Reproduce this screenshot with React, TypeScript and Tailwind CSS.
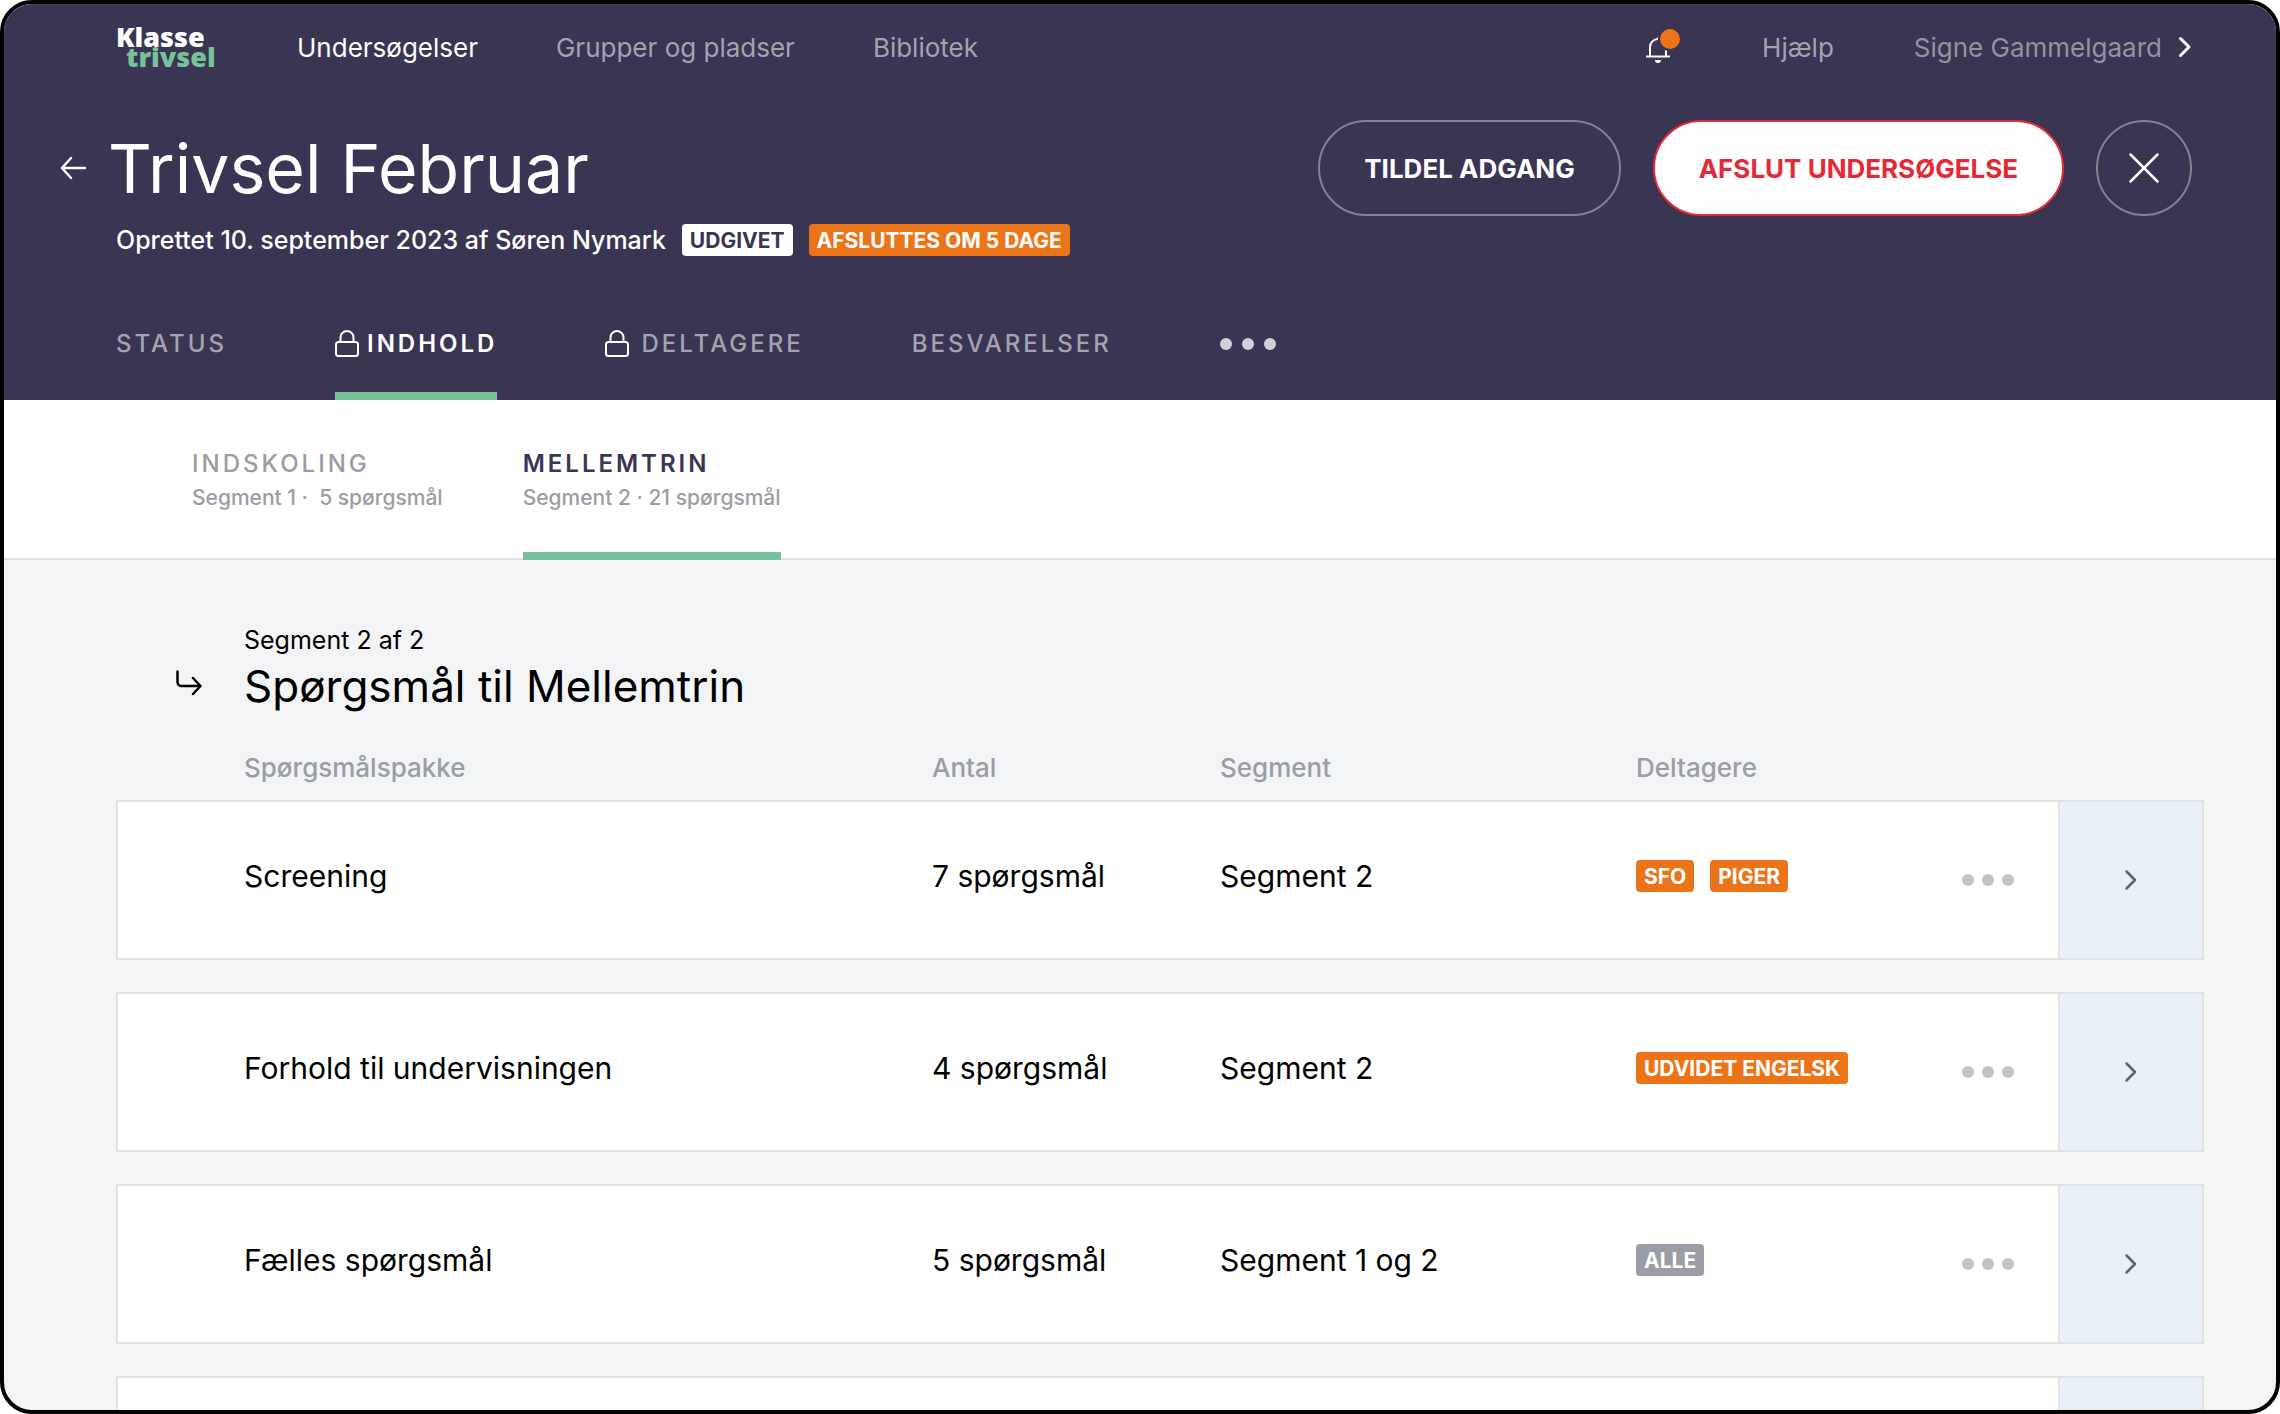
import React from 'react';
import clsx from 'clsx';

type BadgeTone = 'white' | 'orange' | 'gray';

interface PackageRow {
  name: string;
  count: string;
  segment: string;
  participants: { label: string; tone: BadgeTone }[];
}

const PACKAGES: PackageRow[] = [
  {
    name: 'Screening',
    count: '7 spørgsmål',
    segment: 'Segment 2',
    participants: [
      { label: 'SFO', tone: 'orange' },
      { label: 'PIGER', tone: 'orange' },
    ],
  },
  {
    name: 'Forhold til undervisningen',
    count: '4 spørgsmål',
    segment: 'Segment 2',
    participants: [{ label: 'UDVIDET ENGELSK', tone: 'orange' }],
  },
  {
    name: 'Fælles spørgsmål',
    count: '5 spørgsmål',
    segment: 'Segment 1 og 2',
    participants: [{ label: 'ALLE', tone: 'gray' }],
  },
  { name: '', count: '', segment: '', participants: [] },
];

// Shared by the heading row and the cards so the columns line up
const GRID = 'grid grid-cols-[814fr_288fr_416fr_300fr_122px_144px] border-x-2';

function Badge({ label, tone }: { label: string; tone: BadgeTone }) {
  return (
    <span
      className={clsx(
        'inline-flex h-8 items-center rounded px-2 text-[21px] leading-none font-bold whitespace-nowrap',
        tone === 'white' && 'bg-white text-[#393552]',
        tone === 'orange' && 'bg-[#ec7418] text-white',
        tone === 'gray' && 'bg-[#9a9da6] text-white'
      )}
    >
      {label}
    </span>
  );
}

function Dots({ className, gap }: { className: string; gap: number }) {
  return (
    <svg width={12 + gap * 2} height="12" viewBox={`0 0 ${12 + gap * 2} 12`} className={className} fill="currentColor">
      <circle cx="6" cy="6" r="6" />
      <circle cx={6 + gap} cy="6" r="6" />
      <circle cx={6 + gap * 2} cy="6" r="6" />
    </svg>
  );
}

function LockIcon() {
  return (
    <svg width="24" height="28" viewBox="0 0 24 28" fill="none" stroke="white" strokeWidth="2" className="shrink-0">
      <rect x="1" y="12" width="22" height="14" rx="2.5" />
      <path d="M5.500 12V7.500a6.500 6.500 0 0 1 13 0V12" />
    </svg>
  );
}

function ChevronIcon({ className, width }: { className: string; width: number }) {
  return (
    <svg
      width="14"
      height="22"
      viewBox="0 0 14 22"
      fill="none"
      stroke="currentColor"
      strokeWidth={width}
      strokeLinecap="round"
      strokeLinejoin="round"
      className={className}
    >
      <path d="M2.5 2.5 11 11l-8.5 8.5" />
    </svg>
  );
}

function Logo() {
  return (
    <a href="#" className="flex w-[181px] flex-col font-['Open_Sans'] text-[27px] leading-5 font-extrabold">
      <span className="text-white">Klasse</span>
      <span className="pl-[10px] text-[#77c29b]">trivsel</span>
    </a>
  );
}

function BellIcon() {
  return (
    <svg width="36" height="36" viewBox="0 0 36 36" fill="none">
      <path d="M12 10V8.5M4 27.5V18a8 8 0 0 1 8-8 8 8 0 0 1 8 8v9.5" stroke="white" strokeWidth="2" />
      <path d="M0 27.5h24" stroke="white" strokeWidth="2" />
      <path d="M9 31h6a3 3 0 0 1-6 0Z" fill="white" />
      <circle cx="24" cy="10" r="12" fill="#393552" />
      <circle cx="24" cy="10" r="10" fill="#ec7418" />
    </svg>
  );
}

function TopNav() {
  return (
    <nav className="flex h-[86px] items-center pr-[84px] pl-28 text-[26px] text-[#a5a4ae]">
      <Logo />
      <div className="flex gap-[78px]">
        <a href="#" className="text-white">Undersøgelser</a>
        <a href="#">Grupper og pladser</a>
        <a href="#">Bibliotek</a>
      </div>
      <div className="ml-auto flex items-center gap-20">
        <button aria-label="Notifikationer" className="cursor-pointer">
          <BellIcon />
        </button>
        <a href="#">Hjælp</a>
        <button className="flex cursor-pointer items-center gap-4 text-[#93959e]">
          Signe Gammelgaard
          <ChevronIcon className="text-white" width={3} />
        </button>
      </div>
    </nav>
  );
}

function Header() {
  return (
    <header className="bg-[#393552] text-white">
      <TopNav />
      <div className="flex items-center pt-[30px] pr-[84px] pl-14">
        <a href="#" aria-label="Tilbage" className="mr-5">
          <svg width="28" height="24" viewBox="0 0 28 24" fill="none" stroke="white" strokeWidth="2.5" strokeLinecap="round" strokeLinejoin="round">
            <path d="M25 12H2M11 2 2 12l9 10" />
          </svg>
        </a>
        <h1 className="text-[68px] leading-[96px]">Trivsel Februar</h1>
        <div className="ml-auto flex gap-8 text-[26px] font-bold">
          <button className="h-24 cursor-pointer rounded-full border-2 border-[#86838f] px-11">TILDEL ADGANG</button>
          <button className="h-24 cursor-pointer rounded-full border-2 border-[#e22b38] bg-white px-11 text-[#e22b38]">
            AFSLUT UNDERSØGELSE
          </button>
          <button aria-label="Luk" className="flex size-24 cursor-pointer items-center justify-center rounded-full border-2 border-[#86838f]">
            <svg width="30" height="30" viewBox="0 0 30 30" stroke="white" strokeWidth="2.5" strokeLinecap="round">
              <path d="M1.500 1.500 28.500 28.500M28.500 1.500 1.500 28.500" />
            </svg>
          </button>
        </div>
      </div>
      <div className="flex items-center pt-2 pl-28">
        <p className="mr-4 text-[25px] leading-8 font-medium">Oprettet 10. september 2023 af Søren Nymark</p>
        <div className="flex gap-4">
          <Badge label="UDGIVET" tone="white" />
          <Badge label="AFSLUTTES OM 5 DAGE" tone="orange" />
        </div>
      </div>
      <div className="mt-8 flex h-28 gap-[108px] pl-28 text-[24px] leading-none font-medium tracking-[3px] text-[#a5a4ae]">
        <a href="#" className="flex items-center">STATUS</a>
        <a href="#" className="flex items-center gap-2 border-b-8 border-[#77c29b] pt-2 font-semibold text-white">
          <LockIcon />
          INDHOLD
        </a>
        <a href="#" className="flex items-center gap-3">
          <LockIcon />
          DELTAGERE
        </a>
        <a href="#" className="flex items-center">BESVARELSER</a>
        <button aria-label="Flere faner" className="cursor-pointer">
          <Dots className="text-[#d0cfd6]" gap={22} />
        </button>
      </div>
    </header>
  );
}

function SegmentTab({ title, info, active }: { title: string; info: string; active?: boolean }) {
  return (
    <a
      href="#"
      className={clsx(
        'flex flex-col border-b-8 pt-12 text-[#9a9da6]',
        active ? 'border-[#77c29b]' : 'border-transparent'
      )}
    >
      <span className={clsx('text-[24px] leading-8 tracking-[3px]', active ? 'font-semibold text-[#393552]' : 'font-medium')}>
        {title}
      </span>
      <span className="text-[21px] leading-9 font-medium">{info}</span>
    </a>
  );
}

function PackageTable() {
  return (
    <table className="block">
      <thead className="block">
        <tr className={clsx(GRID, 'border-transparent text-left text-[26px] leading-8 text-[#9a9da6]')}>
          <th className="pl-[126px] font-medium">Spørgsmålspakke</th>
          <th className="font-medium">Antal</th>
          <th className="font-medium">Segment</th>
          <th className="font-medium">Deltagere</th>
        </tr>
      </thead>
      <tbody className="mt-4 flex flex-col gap-8">
        {PACKAGES.map((row, i) => (
          <tr key={i} className={clsx(GRID, 'h-40 border-y-2 border-[#e0e2e4] bg-white text-[30px]')}>
            <td className="flex items-center pb-2 pl-[126px]">{row.name}</td>
            <td className="flex items-center pb-2">{row.count}</td>
            <td className="flex items-center pb-2">{row.segment}</td>
            <td className="flex items-center gap-4 pb-2">
              {row.participants.map(p => (
                <Badge key={p.label} label={p.label} tone={p.tone} />
              ))}
            </td>
            <td className="flex items-center">
              <button aria-label="Flere valg" className="cursor-pointer px-[26px] py-4">
                <Dots className="text-[#c0c3c6]" gap={20} />
              </button>
            </td>
            <td className="flex border-l-2 border-[#e0e2e4] bg-[#e8eff6]">
              <button aria-label="Åbn" className="flex flex-1 cursor-pointer items-center justify-center">
                <ChevronIcon className="text-[#5f6372]" width={2.5} />
              </button>
            </td>
          </tr>
        ))}
      </tbody>
    </table>
  );
}

export default function App() {
  return (
    <div className="h-screen bg-white font-['Inter',sans-serif]">
      <div className="flex h-full flex-col overflow-hidden rounded-[32px] border-4 border-black bg-[#f3f4f6]">
        <Header />
        <div className="flex h-40 shrink-0 gap-20 bg-white pl-[188px] shadow-[inset_0_-2px_0_#e0e2e4]">
          <SegmentTab title="INDSKOLING" info={'Segment 1 · \u00a05 spørgsmål'} />
          <SegmentTab title="MELLEMTRIN" info="Segment 2 · 21 spørgsmål" active />
        </div>
        <main className="min-h-0 flex-1 overflow-hidden pt-16 pr-[72px] pl-28 text-black">
          <div className="flex items-end pl-[60px]">
            <svg width="26" height="26" viewBox="0 0 26 26" fill="none" stroke="black" strokeWidth="2.5" strokeLinecap="round" strokeLinejoin="round" className="mr-[42px] mb-5">
              <path d="M1.500 1.500V12a4 4 0 0 0 4 4H24M17 8l7.500 8-7.500 8" />
            </svg>
            <div>
              <p className="text-[25px] leading-8">Segment 2 af 2</p>
              <h2 className="text-[44px] leading-[60px]">Spørgsmål til Mellemtrin</h2>
            </div>
          </div>
          <div className="pt-9">
            <PackageTable />
          </div>
        </main>
      </div>
    </div>
  );
}
